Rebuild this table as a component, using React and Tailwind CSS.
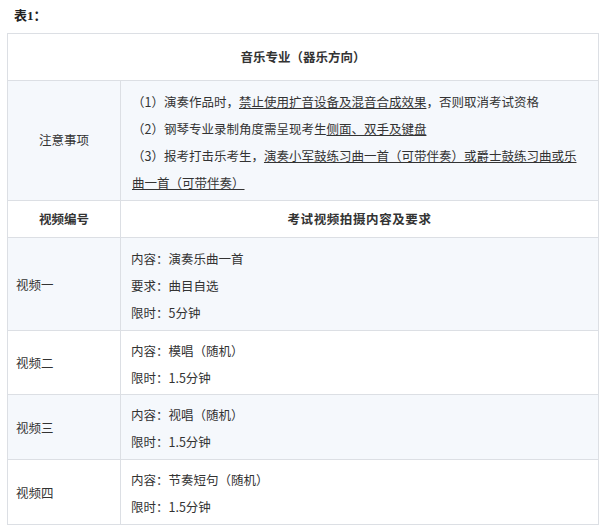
import React from "react";

const cjk = { fontFamily: '"Microsoft YaHei", "Noto Sans CJK SC", "Noto Sans", sans-serif' };

const videos = [
  { name: "视频一", lines: ["内容：演奏乐曲一首", "要求：曲目自选", "限时：5分钟"], h: "h-[93px]", stripe: true },
  { name: "视频二", lines: ["内容：模唱（随机）", "限时：1.5分钟"], h: "h-[64px]", stripe: false },
  { name: "视频三", lines: ["内容：视唱（随机）", "限时：1.5分钟"], h: "h-[65px]", stripe: true },
  { name: "视频四", lines: ["内容：节奏短句（随机）", "限时：1.5分钟"], h: "h-[65px]", stripe: false },
];

export default function App() {
  return (
    <div className="w-[603px] h-[531px] bg-white text-[#333] text-[12.5px]" style={cjk}>
      {/* caption */}
      <p
        className="pl-[14px] pt-[6px] h-[33px] text-[13px] font-bold text-[#222] leading-[20px]"
        style={{ fontFamily: '"Liberation Serif", "Noto Sans CJK SC", serif' }}
      >
        表1：
      </p>

      <table className="ml-[7px] w-[592px] border-collapse table-fixed">
        <colgroup>
          <col className="w-[113px]" />
          <col />
        </colgroup>
        <tbody>
          <tr className="bg-white">
            <td colSpan={2} className="h-[47px] border border-[#dcdfe4] text-center font-bold align-middle">
              音乐专业（器乐方向）
            </td>
          </tr>

          <tr className="bg-[#f5f8fc]">
            <td className="h-[120px] border border-[#dcdfe4] text-center align-middle">注意事项</td>
            <td className="border border-[#dcdfe4] pl-[11px] pr-[14px] pt-[2px] align-middle leading-[27px]">
              <p>
                （1）演奏作品时，<span className="underline underline-offset-1">禁止使用扩音设备及混音合成效果</span>，否则取消考试资格
              </p>
              <p>
                （2）钢琴专业录制角度需呈现考生<span className="underline underline-offset-1">侧面、双手及键盘</span>
              </p>
              <p>
                （3）报考打击乐考生，
                <span className="underline underline-offset-1">演奏小军鼓练习曲一首（可带伴奏）或爵士鼓练习曲或乐曲一首（可带伴奏）</span>
              </p>
            </td>
          </tr>

          <tr className="bg-white font-bold">
            <td className="h-[37px] border border-[#dcdfe4] text-center align-middle">视频编号</td>
            <td className="border border-[#dcdfe4] text-center align-middle tracking-[0.6px]">考试视频拍摄内容及要求</td>
          </tr>

          {videos.map((v) => (
            <tr key={v.name} className={v.stripe ? "bg-[#f5f8fc]" : "bg-white"}>
              <td className={`${v.h} border border-[#dcdfe4] pl-2 pt-[2px] align-middle`}>{v.name}</td>
              <td className="border border-[#dcdfe4] pl-[10px] pt-[2px] align-middle leading-[27px]">
                {v.lines.map((l) => (
                  <p key={l}>{l}</p>
                ))}
              </td>
            </tr>
          ))}
        </tbody>
      </table>
    </div>
  );
}
